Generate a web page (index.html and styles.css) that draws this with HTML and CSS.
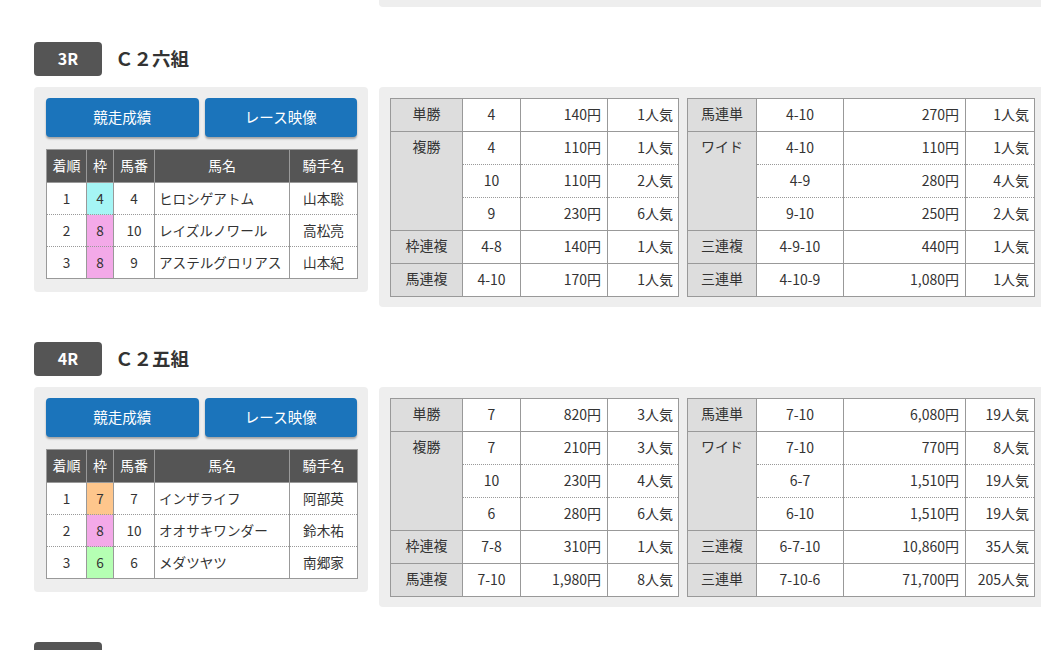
FILE: index.html
```html
<!DOCTYPE html>
<html lang="ja">
<head>
<meta charset="utf-8">
<title>レース結果</title>
<link rel="stylesheet" href="styles.css">
</head>
<body>
<div class="page">
  <div class="tail"><div class="tail-panel"></div></div>

  <section class="race">
    <div class="race-head">
      <span class="race-no">3R</span>
      <h2 class="race-name">Ｃ２六組</h2>
    </div>
    <div class="race-body">
      <div class="result-panel">
        <div class="buttons">
          <a class="btn">競走成績</a>
          <a class="btn">レース映像</a>
        </div>
        <table class="order">
          <colgroup><col class="c-rank"><col class="c-waku"><col class="c-num"><col class="c-horse"><col class="c-jockey"></colgroup>
          <thead><tr><th>着順</th><th>枠</th><th>馬番</th><th>馬名</th><th>騎手名</th></tr></thead>
          <tbody>
            <tr><td>1</td><td class="waku w4">4</td><td>4</td><td class="horse">ヒロシゲアトム</td><td>山本聡</td></tr>
            <tr><td>2</td><td class="waku w8">8</td><td>10</td><td class="horse">レイズルノワール</td><td>高松亮</td></tr>
            <tr><td>3</td><td class="waku w8">8</td><td>9</td><td class="horse">アステルグロリアス</td><td>山本紀</td></tr>
          </tbody>
        </table>
      </div>
      <div class="payout-panel">
        <table class="payout pay-a">
          <colgroup><col class="pa1"><col class="pa2"><col class="pa3"><col class="pa4"></colgroup>
          <tr class="grp"><th>単勝</th><td class="c">4</td><td class="r">140円</td><td class="r">1人気</td></tr>
          <tr class="grp"><th rowspan="3">複勝</th><td class="c">4</td><td class="r">110円</td><td class="r">1人気</td></tr>
          <tr class="sub"><td class="c">10</td><td class="r">110円</td><td class="r">2人気</td></tr>
          <tr class="sub"><td class="c">9</td><td class="r">230円</td><td class="r">6人気</td></tr>
          <tr class="grp"><th>枠連複</th><td class="c">4-8</td><td class="r">140円</td><td class="r">1人気</td></tr>
          <tr class="grp"><th>馬連複</th><td class="c">4-10</td><td class="r">170円</td><td class="r">1人気</td></tr>
        </table>
        <table class="payout pay-b">
          <colgroup><col class="pb1"><col class="pb2"><col class="pb3"><col class="pb4"></colgroup>
          <tr class="grp"><th>馬連単</th><td class="c">4-10</td><td class="r">270円</td><td class="r">1人気</td></tr>
          <tr class="grp"><th rowspan="3">ワイド</th><td class="c">4-10</td><td class="r">110円</td><td class="r">1人気</td></tr>
          <tr class="sub"><td class="c">4-9</td><td class="r">280円</td><td class="r">4人気</td></tr>
          <tr class="sub"><td class="c">9-10</td><td class="r">250円</td><td class="r">2人気</td></tr>
          <tr class="grp"><th>三連複</th><td class="c">4-9-10</td><td class="r">440円</td><td class="r">1人気</td></tr>
          <tr class="grp"><th>三連単</th><td class="c">4-10-9</td><td class="r">1,080円</td><td class="r">1人気</td></tr>
        </table>
      </div>
    </div>
  </section>

  <section class="race">
    <div class="race-head">
      <span class="race-no">4R</span>
      <h2 class="race-name">Ｃ２五組</h2>
    </div>
    <div class="race-body">
      <div class="result-panel">
        <div class="buttons">
          <a class="btn">競走成績</a>
          <a class="btn">レース映像</a>
        </div>
        <table class="order">
          <colgroup><col class="c-rank"><col class="c-waku"><col class="c-num"><col class="c-horse"><col class="c-jockey"></colgroup>
          <thead><tr><th>着順</th><th>枠</th><th>馬番</th><th>馬名</th><th>騎手名</th></tr></thead>
          <tbody>
            <tr><td>1</td><td class="waku w7">7</td><td>7</td><td class="horse">インザライフ</td><td>阿部英</td></tr>
            <tr><td>2</td><td class="waku w8">8</td><td>10</td><td class="horse">オオサキワンダー</td><td>鈴木祐</td></tr>
            <tr><td>3</td><td class="waku w6">6</td><td>6</td><td class="horse">メダツヤツ</td><td>南郷家</td></tr>
          </tbody>
        </table>
      </div>
      <div class="payout-panel">
        <table class="payout pay-a">
          <colgroup><col class="pa1"><col class="pa2"><col class="pa3"><col class="pa4"></colgroup>
          <tr class="grp"><th>単勝</th><td class="c">7</td><td class="r">820円</td><td class="r">3人気</td></tr>
          <tr class="grp"><th rowspan="3">複勝</th><td class="c">7</td><td class="r">210円</td><td class="r">3人気</td></tr>
          <tr class="sub"><td class="c">10</td><td class="r">230円</td><td class="r">4人気</td></tr>
          <tr class="sub"><td class="c">6</td><td class="r">280円</td><td class="r">6人気</td></tr>
          <tr class="grp"><th>枠連複</th><td class="c">7-8</td><td class="r">310円</td><td class="r">1人気</td></tr>
          <tr class="grp"><th>馬連複</th><td class="c">7-10</td><td class="r">1,980円</td><td class="r">8人気</td></tr>
        </table>
        <table class="payout pay-b">
          <colgroup><col class="pb1"><col class="pb2"><col class="pb3"><col class="pb4"></colgroup>
          <tr class="grp"><th>馬連単</th><td class="c">7-10</td><td class="r">6,080円</td><td class="r">19人気</td></tr>
          <tr class="grp"><th rowspan="3">ワイド</th><td class="c">7-10</td><td class="r">770円</td><td class="r">8人気</td></tr>
          <tr class="sub"><td class="c">6-7</td><td class="r">1,510円</td><td class="r">19人気</td></tr>
          <tr class="sub"><td class="c">6-10</td><td class="r">1,510円</td><td class="r">19人気</td></tr>
          <tr class="grp"><th>三連複</th><td class="c">6-7-10</td><td class="r">10,860円</td><td class="r">35人気</td></tr>
          <tr class="grp"><th>三連単</th><td class="c">7-10-6</td><td class="r">71,700円</td><td class="r">205人気</td></tr>
        </table>
      </div>
    </div>
  </section>

  <section class="race">
    <div class="race-head">
      <span class="race-no">5R</span>
      <h2 class="race-name">Ｃ２四組</h2>
    </div>
  </section>
</div>
</body>
</html>
```

FILE: styles.css
```css
html, body {
  margin: 0;
  padding: 0;
  overflow: hidden;
  background: #fff;
}

body {
  font-family: "Noto Sans CJK JP", "Noto Sans", sans-serif;
  color: #333;
}

.page {
  padding-left: 34px;
  width: 1012px;
}

.tail {
  height: 7px;
}

.tail-panel {
  margin-left: 345px;
  width: 667px;
  height: 7px;
  background: #eee;
  border-radius: 0 0 4px 4px;
}

.race {
  margin-top: 35px;
}

.race-head {
  display: flex;
  align-items: center;
  height: 34px;
}

.race-no {
  display: flex;
  align-items: center;
  justify-content: center;
  width: 68px;
  height: 34px;
  background: #555;
  color: #fff;
  border-radius: 4px;
  font-size: 16px;
  font-weight: bold;
  line-height: 1;
  padding-bottom: 2px;
  box-sizing: border-box;
}

.race-name {
  margin: 0 0 0 13px;
  font-size: 18.5px;
  font-weight: bold;
  color: #333;
  line-height: 1;
  padding-bottom: 2px;
}

.race-body {
  display: flex;
  align-items: flex-start;
  gap: 11px;
  margin-top: 11px;
}

.result-panel {
  width: 311px;
  padding: 11px 11px 13px 12px;
  background: #eee;
  border-radius: 4px;
}

.buttons {
  display: flex;
  gap: 6px;
  margin-bottom: 12px;
}

.btn {
  flex: 1;
  display: flex;
  align-items: center;
  justify-content: center;
  height: 39px;
  padding-bottom: 3px;
  box-sizing: border-box;
  background: #1b74bb;
  color: #fff;
  border-radius: 4px;
  box-shadow: 0 2px 2px rgba(0, 0, 0, 0.3);
  font-size: 14.5px;
  text-decoration: none;
}

.order {
  width: 311px;
  border-collapse: collapse;
  table-layout: fixed;
  background: #fff;
  border: 1px solid #999;
  font-size: 13.6px;
}

.c-rank { width: 40px; }
.c-waku { width: 27px; }
.c-num { width: 41px; }
.c-horse { width: 135px; }
.c-jockey { width: 68px; }

.order th {
  height: 30px;
  padding: 0 0 2px;
  background: #555;
  color: #fff;
  font-weight: normal;
  font-size: 14px;
  border: 1px solid #999;
  text-align: center;
}

.order td {
  height: 29px;
  padding: 0 0 2px;
  text-align: center;
  border-left: 1px solid #999;
  border-right: 1px solid #999;
  white-space: nowrap;
}

.order tbody tr + tr td {
  border-top: 1px dotted #999;
}

.order td.horse {
  text-align: left;
  padding-left: 4px;
}

.w4 { background: #a5f5f5; }
.w6 { background: #b5ffb3; }
.w7 { background: #fec68c; }
.w8 { background: #f3a9e8; }

.payout-panel {
  display: flex;
  align-items: flex-start;
  gap: 8px;
  width: 645px;
  padding: 11px 11px 10px;
  background: #eee;
  border-radius: 4px;
}

.payout {
  border-collapse: collapse;
  table-layout: fixed;
  background: #fff;
  border: 1px solid #999;
  font-size: 14px;
}

.pay-a { width: 288px; }
.pay-b { width: 347px; }

.pa1 { width: 72px; }
.pa2 { width: 58px; }
.pa3 { width: 87px; }
.pa4 { width: 71px; }

.pb1 { width: 69px; }
.pb2 { width: 87px; }
.pb3 { width: 122px; }
.pb4 { width: 69px; }

.payout th,
.payout td {
  height: 30px;
  padding: 0 6px 2px;
  line-height: 18px;
  border-left: 1px solid #999;
  border-right: 1px solid #999;
  white-space: nowrap;
}

.payout th {
  background: #ddd;
  font-weight: normal;
  text-align: center;
  vertical-align: top;
  padding-top: 5px;
  padding-bottom: 0;
  height: 27px;
}

.payout tr.grp th,
.payout tr.grp td {
  border-top: 1px solid #999;
}

.payout tr.sub td {
  border-top: 1px dotted #999;
}

.payout td.c { text-align: center; }
.payout td.r { text-align: right; }
.payout td.r:last-child { padding-right: 5px; }
```
